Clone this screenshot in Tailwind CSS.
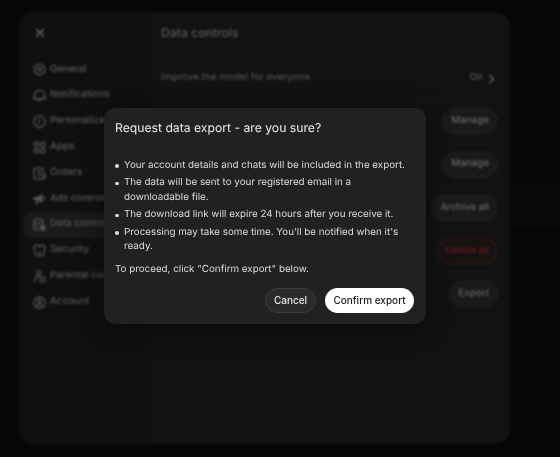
<!doctype html>
<html lang="en">
<head>
  <meta charset="UTF-8">
  <meta name="viewport" content="width=device-width, initial-scale=1.0">
  <title>Data controls</title>
  <script src="https://cdn.jsdelivr.net/npm/@tailwindcss/browser@4"></script>
</head>
<body class="relative h-[457px] w-[560px] overflow-hidden bg-[#060606] font-['Inter',sans-serif] [text-rendering:geometricPrecision]">
  <!-- settings window, dimmed and blurred behind the dialog -->
  <div class="pt-[12px] pl-[19px] blur-[1.2px]">
    <div class="flex h-[432px] w-[491px] overflow-hidden rounded-[14px] bg-[#121212]">
      <aside class="w-[131px] shrink-0 bg-[#101010] pl-[5px] pt-[12px]">
        <div class="mb-[15px] flex h-[18px] items-center pl-[11px]">
          <svg class="h-[10px] w-[10px] text-[#777]" viewBox="0 0 12 12" fill="none" stroke="currentColor" stroke-width="1.6" stroke-linecap="round"><path d="M2 2l8 8M10 2l-8 8"/></svg>
        </div>
        <nav class="flex flex-col text-[9.8px] font-medium text-[#555]">
          <div class="flex h-[25.8px] items-center gap-[4px] pl-[9px]">
            <svg class="h-[13px] w-[13px]" viewBox="0 0 12 12" fill="none" stroke="currentColor" stroke-width="1.2" stroke-linejoin="round"><path d="M6 .8l4.600 2.600v5.200L6 11.200 1.400 8.600V3.400z"/><circle cx="6" cy="6" r="1.700"/></svg>
            <span>General</span>
          </div>
          <div class="flex h-[25.8px] items-center gap-[4px] pl-[9px]">
            <svg class="h-[13px] w-[13px]" viewBox="0 0 12 12" fill="none" stroke="currentColor" stroke-width="1.2"><path d="M6 1a4.500 4.500 0 0 1 4.500 4.500c0 2 .5 2.500 1 3.500H.5c.5-1 1-1.500 1-3.500A4.500 4.500 0 0 1 6 1zM4.500 10.500h3"/></svg>
            <span>Notifications</span>
          </div>
          <div class="flex h-[25.8px] items-center gap-[4px] pl-[9px]">
            <svg class="h-[13px] w-[13px]" viewBox="0 0 12 12" fill="none" stroke="currentColor" stroke-width="1.2"><circle cx="6" cy="6" r="5.200"/><path d="M6 3v3.500l-1.800 1"/></svg>
            <span>Personalization</span>
          </div>
          <div class="flex h-[25.8px] items-center gap-[4px] pl-[9px]">
            <svg class="h-[13px] w-[13px]" viewBox="0 0 12 12" fill="none" stroke="currentColor" stroke-width="1.2"><circle cx="3" cy="3" r="2.100"/><circle cx="9" cy="3" r="2.100"/><circle cx="3" cy="9" r="2.100"/><circle cx="9" cy="9" r="2.100"/></svg>
            <span>Apps</span>
          </div>
          <div class="flex h-[25.8px] items-center gap-[4px] pl-[9px]">
            <svg class="h-[13px] w-[13px]" viewBox="0 0 12 12" fill="none" stroke="currentColor" stroke-width="1.2"><rect x="1" y="1" width="8.500" height="10" rx="1.500"/><path d="M4 4h2.500v3.500H4M9.500 7.500h1.500v2a1.500 1.500 0 0 1-1.500 1.500"/></svg>
            <span>Orders</span>
          </div>
          <div class="flex h-[25.8px] items-center gap-[4px] pl-[9px]">
            <svg class="h-[13px] w-[13px]" viewBox="0 0 12 12" fill="currentColor"><path d="M.5 4.500h3L9 1.500v8.500L3.500 7.500h-3z"/><path d="M2.500 8h2v3h-2zM10 4.500h1.500v2.500H10z"/></svg>
            <span>Ads controls</span>
          </div>
          <div class="flex h-[25.8px] items-center gap-[4px] rounded-l-[8px] bg-[#1a1a1a] pl-[9px]">
            <svg class="h-[13px] w-[13px]" viewBox="0 0 12 12" fill="none" stroke="currentColor" stroke-width="1.2"><path d="M5.500 11H2.500A1.500 1.500 0 0 1 1 9.500v-7A1.500 1.500 0 0 1 2.500 1h5A1.500 1.500 0 0 1 9 2.500V6M1 4.500h8M1 7.500h4.500"/><circle cx="9" cy="9.200" r="2.200" fill="currentColor"/></svg>
            <span>Data controls</span>
          </div>
          <div class="flex h-[25.8px] items-center gap-[4px] pl-[9px]">
            <svg class="h-[13px] w-[13px]" viewBox="0 0 12 12" fill="none" stroke="currentColor" stroke-width="1.2"><path d="M1 3.500C1 2 2.200 1 3.500 1 5 1 6 2 6 3.500 6 2 7 1 8.500 1 9.800 1 11 2 11 3.500c0 2-1 2.500-1 4.500 0 1.500-.8 3-2 3S6.500 9.500 6 8c-.5 1.500-.8 3-2 3S2 9.500 2 8c0-2-1-2.500-1-4.500z"/></svg>
            <span>Security</span>
          </div>
          <div class="flex h-[25.8px] items-center gap-[4px] pl-[9px]">
            <svg class="h-[13px] w-[13px]" viewBox="0 0 12 12" fill="none" stroke="currentColor" stroke-width="1.2"><circle cx="5.500" cy="2.800" r="2"/><path d="M.8 11l3-5h3"/><circle cx="8.800" cy="8.800" r="2.200"/></svg>
            <span>Parental controls</span>
          </div>
          <div class="flex h-[25.8px] items-center gap-[4px] pl-[9px]">
            <svg class="h-[13px] w-[13px]" viewBox="0 0 12 12" fill="none" stroke="currentColor" stroke-width="1.2"><circle cx="6" cy="6" r="5.200"/><circle cx="6" cy="4.800" r="1.800"/><path d="M2.800 9.800c.8-1.500 1.800-2 3.200-2s2.400.5 3.200 2"/></svg>
            <span>Account</span>
          </div>
        </nav>
      </aside>
      <main class="flex-1 pl-[11px] pr-[12px]">
        <div class="flex h-[44px] items-end border-b border-[#191919] pb-[13px]">
          <h1 class="text-[12.2px] font-medium leading-[18px] text-[#5a5a5a]">Data controls</h1>
        </div>
        <div class="flex h-[43.4px] items-center justify-between pt-[2px] text-[9.8px] font-medium text-[#4f4f4f]">
          <span>Improve the model for everyone</span>
          <span class="flex items-center gap-[5px] pr-[3px] text-[#5a5a5a]">On
            <svg class="h-[10px] w-[7px] text-[#666]" viewBox="0 0 7 10" fill="none" stroke="currentColor" stroke-width="1.400" stroke-linecap="round" stroke-linejoin="round"><path d="M1.500 1l4 4-4 4"/></svg>
          </span>
        </div>
        <div class="flex h-[43.2px] items-center justify-end border-t border-[#191919] text-[9.8px] font-medium text-[#666]">
          <span class="flex h-[26px] items-center rounded-full border border-[#222] bg-[#1a1a1a] px-[8px]">Manage</span>
        </div>
        <div class="flex h-[43.2px] items-center justify-end border-t border-[#191919] text-[9.8px] font-medium text-[#666]">
          <span class="flex h-[26px] items-center rounded-full border border-[#222] bg-[#1a1a1a] px-[8px]">Manage</span>
        </div>
        <div class="flex h-[43.2px] items-center justify-end border-t border-[#191919] text-[9.8px] font-medium text-[#666]">
          <span class="flex h-[26px] items-center rounded-full border border-[#222] bg-[#1a1a1a] px-[8px]">Archive all</span>
        </div>
        <div class="flex h-[43.2px] items-center justify-end border-t border-[#191919] text-[9.8px] font-medium text-[#641c1c]">
          <span class="flex h-[26px] items-center rounded-full border border-[#401818] bg-[#171212] px-[8px]">Delete all</span>
        </div>
        <div class="flex h-[43.2px] items-center justify-end border-t border-[#191919] text-[9.8px] font-medium text-[#666]">
          <span class="flex h-[26px] items-center rounded-full border border-[#222] bg-[#1a1a1a] px-[8px]">Export</span>
        </div>
      </main>
    </div>
  </div>

  <!-- faint band to the right of the window -->
  <div class="absolute left-[510px] top-[185px] h-[43px] w-[50px] bg-[#0a0a0a]"></div>

  <!-- dialog -->
  <div class="absolute left-[104px] top-[108px] h-[216px] w-[322px] rounded-[12px] bg-[#212121] pl-[11px] pt-[10px] text-[#dcdcdc] shadow-[0_4px_24px_rgba(0,0,0,0.4)]">
    <h2 class="text-[12.2px] font-normal leading-[20px] text-[#ececec]">Request data export - are you sure?</h2>
    <ul class="mt-[20.5px] w-[294px] text-[9.8px] leading-[14.5px]">
      <li class="flex"><span class="mr-[5.5px] mt-[5.5px] h-[3.5px] w-[3.5px] shrink-0 rounded-full bg-[#e0e0e0]"></span><span>Your account details and chats will be included in the export.</span></li>
      <li class="mt-[3px] flex"><span class="mr-[5.5px] mt-[5.5px] h-[3.5px] w-[3.5px] shrink-0 rounded-full bg-[#e0e0e0]"></span><span>The data will be sent to your registered email in a downloadable file.</span></li>
      <li class="mt-[3px] flex"><span class="mr-[5.5px] mt-[5.5px] h-[3.5px] w-[3.5px] shrink-0 rounded-full bg-[#e0e0e0]"></span><span>The download link will expire 24 hours after you receive it.</span></li>
      <li class="mt-[3px] flex"><span class="mr-[5.5px] mt-[5.5px] h-[3.5px] w-[3.5px] shrink-0 rounded-full bg-[#e0e0e0]"></span><span>Processing may take some time. You'll be notified when it's ready.</span></li>
    </ul>
    <p class="mt-[8.5px] text-[9.8px] leading-[14.5px]">To proceed, click "Confirm export" below.</p>
    <div class="mt-[10.5px] flex justify-end gap-[9px] pr-[12px] text-[10px] font-medium">
      <button class="h-[25px] w-[51px] rounded-full border border-[#3d3d3d] bg-[#2b2b2b] text-[#e6e6e6]">Cancel</button>
      <button class="h-[25px] w-[89px] rounded-full bg-white text-[#1a1a1a]">Confirm export</button>
    </div>
  </div>
</body>
</html>
